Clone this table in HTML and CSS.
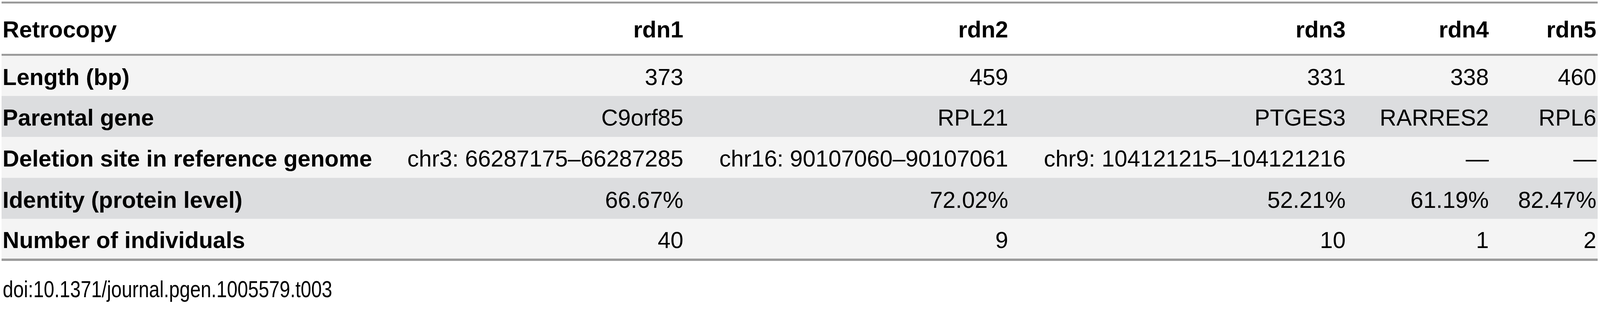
FILE: index.html
```html
<!DOCTYPE html>
<html>
<head>
<meta charset="utf-8">
<link rel="stylesheet" href="styles.css">
</head>
<body>
<div class="page">
  <table class="data">
    <colgroup>
      <col class="c0"><col class="c1"><col class="c2"><col class="c3"><col class="c4"><col class="c5">
    </colgroup>
    <thead>
      <tr class="head">
        <th class="label">Retrocopy</th>
        <th class="num">rdn1</th>
        <th class="num">rdn2</th>
        <th class="num">rdn3</th>
        <th class="num">rdn4</th>
        <th class="num">rdn5</th>
      </tr>
    </thead>
    <tbody>
      <tr class="light">
        <td class="label">Length (bp)</td>
        <td class="num">373</td><td class="num">459</td><td class="num">331</td><td class="num">338</td><td class="num">460</td>
      </tr>
      <tr class="dark">
        <td class="label">Parental gene</td>
        <td class="num">C9orf85</td><td class="num">RPL21</td><td class="num">PTGES3</td><td class="num">RARRES2</td><td class="num">RPL6</td>
      </tr>
      <tr class="light">
        <td class="label">Deletion site in reference genome</td>
        <td class="num">chr3: 66287175–66287285</td><td class="num">chr16: 90107060–90107061</td><td class="num">chr9: 104121215–104121216</td><td class="num">—</td><td class="num">—</td>
      </tr>
      <tr class="dark">
        <td class="label">Identity (protein level)</td>
        <td class="num">66.67%</td><td class="num">72.02%</td><td class="num">52.21%</td><td class="num">61.19%</td><td class="num">82.47%</td>
      </tr>
      <tr class="light">
        <td class="label">Number of individuals</td>
        <td class="num">40</td><td class="num">9</td><td class="num">10</td><td class="num">1</td><td class="num">2</td>
      </tr>
    </tbody>
  </table>
  <p class="doi"><span class="doi-text">doi:10.1371/journal.pgen.1005579.t003</span></p>
</div>
</body>
</html>
```

FILE: styles.css
```css
html, body {
  margin: 0;
  padding: 0;
  background: #ffffff;
}

.page {
  padding: 4px 0 0 0.0875vw;
  font-family: "Liberation Sans", Arial, Helvetica, sans-serif;
  color: #000;
}

.data {
  width: 99.76vw;
  table-layout: fixed;
  border-collapse: collapse;
  font-size: 1.4436vw;
}

.c0 { width: 24.47%; }
.c1 { width: 18.33%; }
.c2 { width: 20.35%; }
.c3 { width: 21.14%; }
.c4 { width: 8.97%; }
.c5 { width: 6.74%; }

.data th,
.data td {
  padding: 8px 3px 0 3px;
  white-space: nowrap;
  vertical-align: middle;
  line-height: 1.15;
}

.head {
  background: #ffffff;
  border-top: 5px solid #9b9b9b;
  border-bottom: 5px solid #9b9b9b;
}

.head th {
  height: 134px;
  box-sizing: border-box;
  padding-top: 5px;
  font-weight: bold;
}

tbody tr {
  height: 105.2px;
}

tbody tr:last-child {
  border-bottom: 6px solid #9b9b9b;
}

.light { background: #f4f4f4; }
.dark { background: #dcdddf; }

.label {
  text-align: left;
  font-weight: bold;
}

.num {
  text-align: right;
  font-weight: normal;
}

.head .num { font-weight: bold; }

.doi {
  margin: 39px 0 0 3px;
  font-size: 1.4436vw;
  line-height: 1.15;
  white-space: nowrap;
}

.doi-text {
  display: inline-block;
  transform: scaleX(0.82);
  transform-origin: left center;
}
```
